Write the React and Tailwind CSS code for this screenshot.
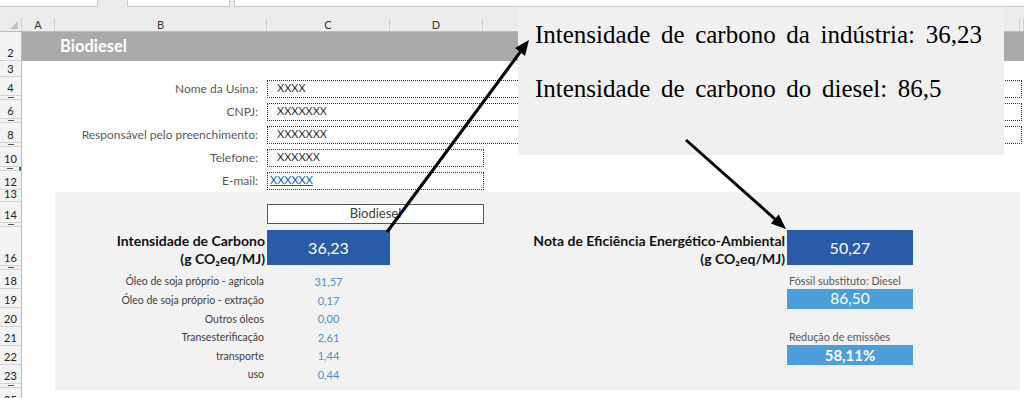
import React from 'react';

const rows = [
  ['2', 29], ['3', 16], ['4', 19], ['5', 4], ['6', 19], ['7', 4], ['8', 20], ['9', 4],
  ['10', 20], ['11', 4], ['12', 19], ['13', 12], ['14', 21], ['15', 4], ['16', 39], ['17', 4],
  ['18', 19], ['19', 19], ['20', 19], ['21', 19], ['22', 19], ['23', 19], ['24', 4], ['25', 20],
];

// column E sits under the callout, so its letter is left out
const cols = [
  ['A', 'w-[33px]'], ['B', 'w-[212px]'], ['C', 'w-[123px]'], ['D', 'w-[93px]'], ['', 'w-[537px]'], ['', 'flex-1'],
];

const fields = [
  { label: 'Nome da Usina:', value: 'XXXX', wide: true },
  { label: 'CNPJ:', value: 'XXXXXXX', wide: true },
  { label: 'Responsável pelo preenchimento:', value: 'XXXXXXX', wide: true },
  { label: 'Telefone:', value: 'XXXXXX' },
  { label: 'E-mail:', value: 'XXXXXX', link: true },
];

const parts = [
  ['Óleo de soja próprio - agrícola', '31,57'],
  ['Óleo de soja próprio - extração', '0,17'],
  ['Outros óleos', '0,00'],
  ['Transesterificação', '2,61'],
  ['transporte', '1,44'],
  ['uso', '0,44'],
];

function Arrows() {
  return (
    <svg className="absolute left-0 top-0 pointer-events-none" width="1024" height="398">
      <line x1="387" y1="232" x2="521" y2="51" stroke="#000" strokeWidth="3" />
      <polygon points="529,40 525,56 515,48" fill="#000" />
      <line x1="686" y1="140" x2="776" y2="220" stroke="#000" strokeWidth="3" />
      <polygon points="786,229 770.8,223.5 778.8,214.5" fill="#000" />
    </svg>
  );
}

export default function App() {
  return (
    <div className="relative w-[1024px] h-[398px] overflow-hidden bg-white font-[Lato,sans-serif] text-[#404040]">
      {/* formula bar strip */}
      <div className="h-[18px] bg-[#ececec] flex items-start">
        <div className="w-[98px] h-[7px] bg-white border-r border-b border-[#c8c8c8]" />
        <div className="ml-[29px] w-[103px] h-[7px] bg-white border-x border-b border-[#c8c8c8]" />
        <div className="ml-[4px] flex-1 h-[7px] bg-white border-l border-b border-[#c8c8c8]" />
      </div>
      {/* column headers */}
      <div className="h-[14px] flex bg-[#ececec] border-b border-[#bdbdbd] text-[11px] leading-[13px] text-[#333]">
        <div className="w-[22px] relative border-r border-[#d0d0d0]">
          <div className="absolute right-[3px] bottom-[2px] w-0 h-0 border-l-[8px] border-l-transparent border-b-[8px] border-b-[#c4c4c4]" />
        </div>
        {cols.map(([c, w], i) => (
          <div key={i} className={`${w} text-center border-r border-[#d0d0d0]`}>{c}</div>
        ))}
      </div>

      <div className="flex">
        {/* row headers */}
        <div className="w-[22px] flex flex-col bg-[#f3f3f3] border-r border-[#bdbdbd]">
          {rows.map(([n, h]) => (
            <div
              key={n}
              style={{ height: h }}
              className={`flex items-end justify-center border-b border-[#d4d4d4] text-[11px] leading-[13px] text-[#222] ${n === '11' ? 'border-r-2 border-r-[#217346]' : ''}`}
            >
              {h > 5 ? (
                <span className="pb-[1px]">{n}</span>
              ) : (
                <span className="mb-[1px] w-[6px] h-[1px] bg-[#555]" />
              )}
            </div>
          ))}
        </div>

        {/* sheet body */}
        <div className="flex-1 flex flex-col">
          <div className="h-[29px] bg-[#aaaaaa] flex items-center pl-[38px] text-[16.5px] font-bold text-white">
            Biodiesel
          </div>
          <div className="h-[16px]" />

          {fields.map((f) => (
            <div key={f.label} className="h-[23px] flex items-center">
              <div className="w-[245px] pr-[9px] text-right text-[12px] text-[#595959]">{f.label}</div>
              <div className={`${f.wide ? 'w-[755px]' : 'w-[217px]'} h-[18px] border border-dotted border-[#333] flex items-center text-[11px]`}>
                {f.link ? (
                  <span className="pl-[2px] text-[#0563c1] underline">{f.value}</span>
                ) : (
                  <span className="pl-[9px] text-[#333]">{f.value}</span>
                )}
              </div>
            </div>
          ))}

          {/* result panel */}
          <div className="ml-[33px] w-[965px] h-[198px] bg-[#f2f2f2] flex flex-col pt-[12px]">
            <div className="h-[20px] flex">
              <div className="ml-[212px] w-[217px] bg-white border border-[#555] flex items-center justify-center text-[13px] text-[#404040]">
                Biodiesel
              </div>
            </div>

            <div className="mt-[6px] h-[35px] flex">
              <div className="w-[212px] pr-[2px] pt-[2px] text-right text-[14px] leading-[18px] font-bold text-[#111]">
                <div>Intensidade de Carbono</div>
                <div>(g CO₂eq/MJ)</div>
              </div>
              <div className="w-[123px] bg-[#2a5aa8] flex items-center justify-center text-[16px] text-white">36,23</div>
              <div className="w-[397px] pr-[2px] pt-[2px] text-right text-[14px] leading-[18px] font-bold text-[#111]">
                <div>Nota de Eficiência Energético-Ambiental</div>
                <div>(g CO₂eq/MJ)</div>
              </div>
              <div className="w-[126px] bg-[#2a5aa8] flex items-center justify-center text-[16px] text-white">50,27</div>
            </div>

            <div className="mt-[8px] flex">
              <div className="w-[335px] flex flex-col">
                {parts.map(([l, v]) => (
                  <div key={l} className="h-[18.6px] flex items-center text-[10.5px]">
                    <div className="w-[212px] pr-[3px] text-right text-[#404040]">{l}</div>
                    <div className="w-[123px] text-center text-[11px] text-[#4a8fd6]">{v}</div>
                  </div>
                ))}
              </div>
              <div className="ml-[397px] w-[126px] flex flex-col">
                <div className="h-[16px] flex items-center pl-[2px] text-[10.8px] whitespace-nowrap text-[#595959]">Fóssil substituto: Diesel</div>
                <div className="h-[20px] bg-[#4d9fdb] flex items-center justify-center text-[15.5px] text-white">86,50</div>
                <div className="h-[20px]" />
                <div className="h-[16px] flex items-center pl-[2px] text-[10.8px] whitespace-nowrap text-[#595959]">Redução de emissões</div>
                <div className="h-[20px] bg-[#4d9fdb] flex items-center justify-center text-[15px] font-bold text-white">58,11%</div>
              </div>
            </div>
          </div>
        </div>
      </div>

      {/* callout */}
      <div className="absolute left-[518px] top-[7px] w-[486px] h-[148px] bg-[#f0f0f0] pl-[17px] pt-[13px] font-['Liberation_Serif',serif] text-[25px] leading-[30px] [word-spacing:4.4px] text-black">
        <div className="whitespace-nowrap">Intensidade de carbono da indústria: 36,23</div>
        <div className="mt-[24px] whitespace-nowrap">Intensidade de carbono do diesel: 86,5</div>
      </div>

      <Arrows />
    </div>
  );
}
